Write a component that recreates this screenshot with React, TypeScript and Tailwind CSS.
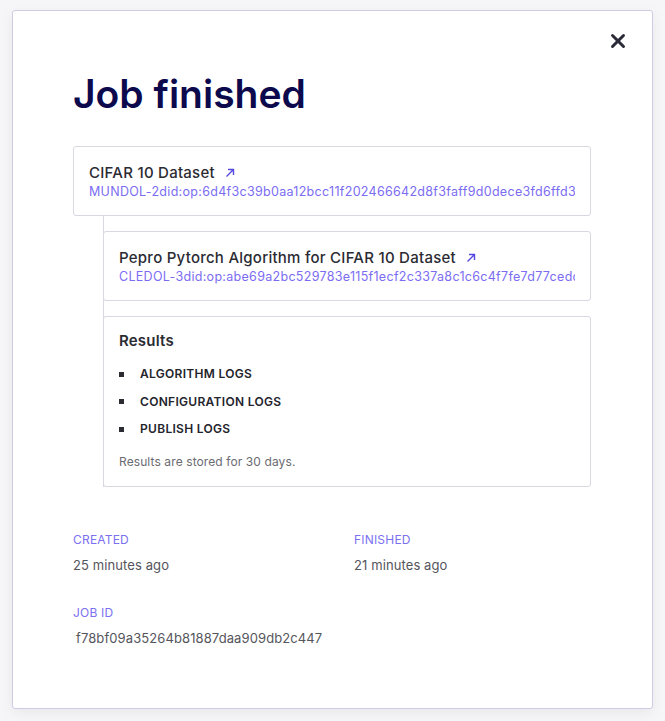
import { X } from "lucide-react";

function ArrowUpRight() {
  return (
    <svg width="12" height="12" viewBox="0 0 12 12" fill="none" className="ml-[9px] inline-block">
      <path d="M2.5 9.5L9.5 2.5M4 2.5H9.5V8" stroke="#5548e0" strokeWidth="1.4" />
    </svg>
  );
}

function AssetCard({ title, did }: { title: string; did: string }) {
  return (
    <div className="rounded-[3px] border border-[#d8d7e2] bg-white px-[15px] pb-[15px] pt-[16px]">
      <div className="flex items-center text-[15px] font-medium leading-[20px] tracking-[0.25px] text-[#2b2b33]">
        {title}
        <ArrowUpRight />
      </div>
      <div className="overflow-hidden whitespace-nowrap text-[12.5px] leading-[17px] tracking-[0.3px] text-[#7b6cf2]">{did}</div>
    </div>
  );
}

export default function App() {
  const logs = ["ALGORITHM LOGS", "CONFIGURATION LOGS", "PUBLISH LOGS"];
  return (
    <main
      className="flex h-[721px] w-[665px] items-start bg-[#f6f6f8] pl-[12px] pt-[10px]"
      style={{ fontFamily: "Inter, 'Open Sans', sans-serif" }}
    >
      <div className="relative h-[699px] w-[641px] rounded-[3px] border border-[#cfcbe2] bg-white pl-[60px] pr-[61px] shadow-[0_4px_14px_rgba(0,0,0,0.06)]">
        <button className="absolute right-[23px] top-[19px] text-[#2a2a38]">
          <X size={22} strokeWidth={3.2} />
        </button>
        <h1 className="mt-[61px] text-[39px] font-semibold leading-[44px] text-[#0c0a4d]">Job finished</h1>
        <div className="mt-[30px]">
          <AssetCard title="CIFAR 10 Dataset" did="MUNDOL-2did:op:6d4f3c39b0aa12bcc11f202466642d8f3faff9d0dece3fd6ffd32c" />
          <div className="ml-[30px] flex flex-col gap-[15px] border-l border-[#d8d7e2] pt-[15px]">
            <div className="-ml-px">
              <AssetCard
                title="Pepro Pytorch Algorithm for CIFAR 10 Dataset"
                did="CLEDOL-3did:op:abe69a2bc529783e115f1ecf2c337a8c1c6c4f7fe7d77cedd8e"
              />
            </div>
            <div className="-ml-px rounded-[3px] border border-[#d8d7e2] px-[15px] pb-[15px] pt-[14px]">
              <div className="text-[15px] font-semibold leading-[20px] tracking-[0.2px] text-[#2b2b33]">Results</div>
              <ul className="mt-[14px] flex flex-col gap-[9.5px]">
                {logs.map((l) => (
                  <li key={l} className="flex items-center text-[12px] font-semibold leading-[18px] tracking-[0.3px] text-[#24242c]">
                    <span className="mr-[16px] h-[5px] w-[5px] bg-[#2b2b33]" />
                    {l}
                  </li>
                ))}
              </ul>
              <p className="mt-[15px] text-[12px] leading-[18px] tracking-[0.1px] text-[#6b6b72]">Results are stored for 30 days.</p>
            </div>
          </div>
        </div>
        <div className="mt-[45px] grid grid-cols-2">
          <div>
            <div className="text-[12px] leading-[16px] tracking-[0.2px] text-[#7b70f0]">CREATED</div>
            <div className="mt-[8px] text-[13px] leading-[18px] tracking-[0.1px] text-[#55555c]">25 minutes ago</div>
          </div>
          <div className="pl-[22px]">
            <div className="text-[12px] leading-[16px] tracking-[0.2px] text-[#7b70f0]">FINISHED</div>
            <div className="mt-[8px] text-[13px] leading-[18px] tracking-[0.1px] text-[#55555c]">21 minutes ago</div>
          </div>
        </div>
        <div className="mt-[31px]">
          <div className="text-[12px] leading-[16px] tracking-[0.2px] text-[#7b70f0]">JOB ID</div>
          <div className="mt-[8px] pl-[3px] text-[13px] leading-[18px] tracking-[0.1px] text-[#55555c]">f78bf09a35264b81887daa909db2c447</div>
        </div>
      </div>
    </main>
  );
}
